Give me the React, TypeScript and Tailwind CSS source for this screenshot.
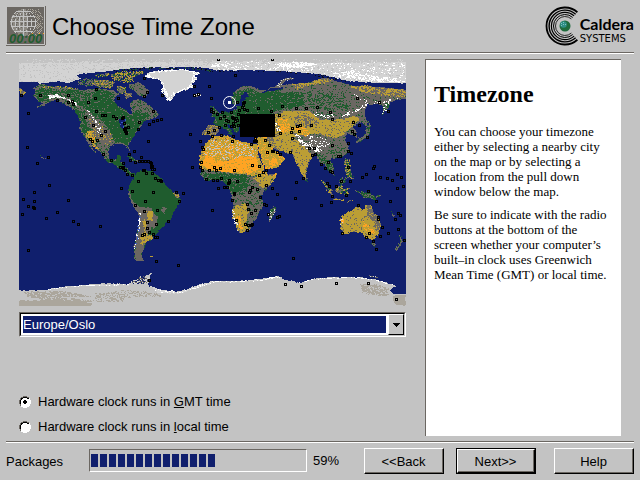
import React, { useState } from "react";

const MAP_W = 387;
const MAP_H = 247;

const PALETTE: Record<string, string> = {
  o: "#101f6d",
  u: "#3c5cc4",
  g: "#1f5c2e",
  s: "#6b6762",
  t: "#bb9e35",
  f: "#ffa423",
  i: "#c3c3c3",
  l: "#d3d3d3",
  d: "#aba69c",
  w: "#ffffff",
  k: "#0a0c18",
};

/* Terrain outlines live on four sheets, three units to a map pixel. */
type Sheet = "NW" | "NE" | "SW" | "SE";
const ORIGIN: Record<Sheet, [number, number]> = {
  NW: [-4, -4],
  NE: [191, -4],
  SW: [-4, 121],
  SE: [191, 121],
};

/* sheet, colour mix (one letter per share), outline */
const REGIONS: [Sheet, string, string][] = [
  ["NW", "lllllllliil", "0,0 600,0 600,45 570,38 545,37 500,36 450,39 400,38 350,40 300,46 250,52 205,56 185,62 200,70 160,84 130,80 75,85 60,81 0,82"],
  ["NE", "lllllliwl", "0,0 610,0 610,86 530,84 470,82 420,78 380,70 330,60 280,54 200,48 130,46 60,48 0,45"],
  ["NE", "iiiiiil", "0,0 610,0 610,20 420,24 0,18"],
  ["NW", "iiiiil", "0,0 600,0 600,20 12,24"],
  ["NE", "wwwl", "200,26 250,20 330,28 270,40 200,38"],
  ["NE", "wl", "360,56 420,48 480,62 560,68 588,82 470,78 400,68"],
  ["NE", "wl", "10,26 60,26 50,36 0,36"],
  ["NW", "ookog", "300,46 350,40 400,38 450,39 520,37 590,44 590,49 500,41 400,43 300,51"],
  ["NE", "ookoo", "0,46 200,48 330,58 380,70 420,80 380,78 320,64 200,51 0,50"],
  ["NW", "wwl", "390,62 410,49 450,46 500,42 540,50 556,55 540,62 545,75 530,85 535,95 520,102 500,108 480,118 470,135 455,138 448,120 438,105 445,90 430,72 400,68"],
  ["NW", "lllllll", "402,60 420,53 450,50 500,46 530,52 534,66 526,84 516,98 496,106 476,114 466,128 460,128 456,110 450,100 450,88 434,72 408,64"],
  ["NW", "ssgo", "190,78 215,68 245,72 240,90 215,94 188,88"],
  ["NW", "stgs", "235,74 285,76 300,84 290,100 255,98 232,88"],
  ["NW", "ttsgo", "285,58 330,48 395,50 370,60 350,70 360,78 330,84 296,76"],
  ["NW", "tsgo", "240,58 280,54 282,66 250,68"],
  ["NW", "ssssg", "342,88 372,82 388,92 400,108 392,128 370,120 356,104 345,98"],
  ["NW", "sstg", "305,92 330,96 336,112 315,118 306,106"],
  ["NW", "ssst", "328,116 350,112 352,126 334,130"],
  ["NW", "st", "12,100 30,106 34,118 14,122"],
  ["NW", "sssssgg", "55,100 75,88 120,95 165,97 200,105 245,100 290,105 312,115 300,130 295,140 305,152 325,160 340,172 348,178 350,160 345,150 350,138 375,132 395,145 420,165 432,182 415,190 385,200 372,222 355,240 345,260 340,272 346,290 335,275 320,268 300,268 285,275 280,300 285,312 300,315 308,300 320,302 315,318 330,335 345,350 365,360 355,365 335,355 315,340 300,328 275,318 262,300 240,275 225,262 245,298 232,285 215,255 200,235 193,215 198,200 185,175 172,160 150,148 125,135 105,140 88,152 60,160 85,145 65,135 55,120 65,110"],
  ["NW", "gggs", "60,112 80,98 120,102 150,108 158,122 150,130 120,124 100,128 72,142"],
  ["NW", "gggggggggs", "238,110 275,108 300,118 296,140 320,165 345,178 355,172 412,178 390,192 372,220 355,243 340,268 320,264 300,262 292,240 275,215 262,196 240,182 220,176 212,160 200,150 215,140 230,130"],
  ["NW", "gggs", "150,100 200,108 230,114 228,140 200,152 170,140"],
  ["NW", "ggggs", "172,150 190,160 208,182 215,200 222,222 216,238 200,230 196,205 186,178"],
  ["NW", "ssssst", "222,190 248,196 268,215 290,240 290,262 272,270 240,240 226,215"],
  ["NW", "wsss", "216,166 224,168 240,195 258,215 258,240 250,236 238,206"],
  ["NW", "ttttsf", "218,228 234,228 242,248 240,262 250,284 238,278 226,258 214,246"],
  ["NW", "tsss", "268,240 278,240 282,270 270,272"],
  ["NW", "wwl", "98,122 125,118 150,128 185,142 188,156 160,136 122,126 104,132"],
  ["NW", "ggggg", "272,308 284,314 300,318 308,300 318,302 314,318 330,336 345,352 362,362 350,364 318,342 298,328 278,320"],
  ["NW", "oooou", "314,192 330,188 334,200 324,222 316,215"],
  ["NW", "ggs", "330,300 350,306 372,318 362,322 340,308"],
  ["NW", "sttg", "62,94 120,94 165,96 190,102 165,101 90,98"],
  ["NW", "sw", "536,118 556,116 560,122 546,126 538,122"],
  ["NW", "gs", "72,300 88,308 92,314 78,306"],
  ["SW", "ggggggggggggggg", "355,-4 362,-20 380,-30 410,-26 430,-10 442,-4 450,15 475,35 495,50 497,62 485,80 475,95 470,115 455,125 440,145 420,165 410,180 395,185 390,200 380,215 378,230 388,243 370,243 360,235 360,200 368,170 372,130 374,100 355,75 343,50 340,30 345,12"],
  ["SW", "ssss", "340,28 345,34 350,60 374,80 410,84 414,96 426,110 428,130 416,146 408,140 400,165 392,182 390,200 380,215 378,230 388,243 370,243 360,235 360,200 368,170 372,130 374,100 355,78 343,50"],
  ["SW", "tttt", "397,92 412,94 414,108 410,122 398,118"],
  ["SW", "ttttts", "384,116 396,128 390,160 412,166 410,180 386,188 378,196 374,185 387,150"],
  ["SW", "ttss", "474,38 486,40 496,52 488,54 478,48"],
  ["SW", "sssg", "442,82 455,84 448,104 438,96"],
  ["SW", "wssu", "372,96 376,98 374,150 364,200 360,225 358,200 368,150"],
  ["SW", "st", "404,228 412,229 410,234 404,233"],
  ["NE", "sst", "-25,238 -5,208 15,212 32,214 28,228 10,243 -10,240"],
  ["NE", "gggggggggggs", "10,205 18,182 40,168 60,172 78,162 82,152 100,152 98,140 110,128 140,120 180,108 240,98 290,100 300,130 290,155 240,165 195,172 195,200 90,200 84,235 74,230 60,208 50,212 68,232 62,240 42,220 30,216"],
  ["NE", "gggs", "64,132 72,112 96,94 124,94 150,104 150,118 120,126 108,110 94,120 88,142 74,152 64,146"],
  ["NE", "ssss", "70,112 96,94 124,94 152,106 200,98 240,98 250,84 180,98 150,114 120,98"],
  ["NE", "ggs", "2,150 14,158 26,174 20,186 4,186 10,172"],
  ["NE", "ssl", "200,92 212,76 245,66 252,70 222,80 210,98"],
  ["NE", "sssssssg", "200,110 245,90 290,85 340,68 370,76 400,85 440,95 500,95 550,100 590,105 590,132 560,135 540,140 525,165 518,180 520,155 500,145 470,150 465,180 475,200 470,215 450,200 430,215 445,250 430,240 410,235 405,255 418,280 400,305 370,310 355,318 370,345 372,365 345,330 330,320 315,295 300,310 285,372 270,345 250,300 215,288 185,278 180,200 190,172 230,160"],
  ["NE", "gggggggs", "195,112 280,112 285,150 250,158 200,166 150,150"],
  ["NE", "ggsss", "285,110 330,105 400,130 420,160 370,170 300,160"],
  ["NE", "stts", "245,88 300,82 342,68 370,74 355,82 330,88 290,94 260,104"],
  ["NE", "tttsss", "420,94 470,90 500,98 588,104 588,128 540,124 490,120 440,106"],
  ["NE", "wsss", "415,104 440,122 460,132 500,140 540,132 572,126 530,144 495,146 450,134 430,120"],
  ["NE", "wwss", "468,140 474,146 462,160 440,168 400,188 394,184 420,170 452,158"],
  ["NE", "wssg", "310,168 350,178 380,172 385,184 350,190 312,180"],
  ["NE", "wsg", "528,144 546,136 540,150 526,168 518,180 520,156"],
  ["NE", "tttttttts", "190,180 225,168 300,168 330,195 400,192 440,182 448,196 425,214 400,240 370,250 330,236 300,236 270,240 250,250 275,262 300,292 305,310 292,330 285,372 270,345 250,300 215,288 185,278 190,240"],
  ["NE", "fftt", "200,190 240,192 240,222 280,212 300,235 290,246 250,222 222,236 205,222"],
  ["NE", "tws", "194,194 204,208 214,228 200,232"],
  ["NE", "tttss", "240,190 290,172 312,190 330,215 300,220 260,215"],
  ["NE", "wwss", "250,232 268,240 282,262 310,276 352,262 338,290 302,288 272,270"],
  ["NE", "wsss", "290,240 345,250 368,270 340,280 300,272"],
  ["NE", "ssggs", "352,290 404,276 414,290 398,306 370,308"],
  ["NE", "ggs", "318,296 340,306 368,326 370,345 362,356 350,330 330,318"],
  ["NE", "sst", "140,246 190,246 200,280 160,262 145,266"],
  ["NE", "tttttf", "136,248 170,246 185,280 225,310 205,336 168,346 150,300 146,270"],
  ["NE", "ffft", "180,318 200,308 206,328 176,342"],
  ["NE", "sgs", "476,196 482,216 478,236 462,252 440,266 438,258 466,238"],
  ["NE", "sg", "414,278 420,292 414,296"],
  ["NE", "gts", "404,310 416,312 424,350 430,372 412,366 404,336"],
  ["NE", "gs", "398,382 408,366 412,370 404,384"],
  ["NE", "gs", "286,366 294,370 294,382 288,380"],
  ["NE", "tttttttfs", "-30,332 -30,300 -15,270 5,243 50,240 65,250 100,262 140,268 146,300 165,345 175,358 200,355 192,380 165,400 100,395 60,396 50,382 30,372 -15,375"],
  ["NE", "tfti", "-25,290 0,256 60,256 134,270 136,306 60,312 0,320"],
  ["NE", "fffffffft", "-30,328 -10,300 40,322 90,304 140,306 148,340 120,356 40,350 0,344"],
  ["NE", "gss", "-30,336 -10,346 50,352 140,362 150,372 60,372 -15,376 -28,356"],
  ["NE", "ggggggs", "-20,358 50,356 100,358 120,372 120,390 56,394 30,374 -14,376"],
  ["SE", "ssssg", "50,-2 190,-10 178,18 150,50 160,75 150,95 135,120 120,150 90,160 80,140 68,100 70,60 60,35"],
  ["SE", "gggggs", "48,-6 112,-8 118,18 100,32 76,40 60,34"],
  ["SE", "ttttts", "130,-8 192,-14 178,14 160,26 140,10"],
  ["SE", "ttttttts", "68,90 82,74 108,70 116,96 106,130 118,150 92,160 80,140"],
  ["SE", "fft", "76,108 92,110 96,150 86,140"],
  ["SE", "wtl", "70,88 74,106 88,156 84,152 66,104"],
  ["SE", "ssgl", "176,96 192,78 198,86 188,116 178,126"],
  ["SE", "stsg", "336,2 350,10 366,34 372,50 360,44 344,18"],
  ["SE", "st", "370,56 400,58 400,62 372,60"],
  ["SE", "gsst", "376,22 396,14 402,30 396,42 380,38"],
  ["SE", "stg", "402,28 420,22 412,34 420,44 406,44"],
  ["SE", "gs", "386,8 396,-8 404,6 396,14"],
  ["SE", "st", "410,66 430,58 426,62 414,68"],
  ["SE", "sg", "430,26 440,30 450,42 440,38"],
  ["SE", "gggs", "448,32 470,38 490,46 498,62 478,54 460,54 454,42"],
  ["SE", "sg", "496,48 512,44 508,50 496,54"],
  ["SE", "ttttttttttts", "390,120 400,105 425,90 445,78 460,90 470,72 480,75 490,95 505,110 512,135 505,160 490,180 470,175 455,158 425,155 400,165 392,145"],
  ["SE", "sssst", "472,74 480,76 490,95 506,112 513,135 506,158 494,144 484,120 472,102"],
  ["SE", "ttff", "458,124 468,126 480,140 496,152 494,164 476,162 464,148"],
  ["SE", "tlf", "390,118 402,112 400,128 392,134"],
  ["SE", "sg", "484,188 496,190 492,202"],
  ["SE", "ssg", "568,162 582,184 574,192 558,212 552,208 570,188"],
  ["SE", "sg", "542,92 556,110 550,112"],
  ["SW", "iiiiiiiii", "0,332 90,330 150,320 200,316 270,309 340,313 355,304 372,296 388,290 410,278 400,302 402,318 440,332 490,336 540,318 590,304 600,400 0,400"],
  ["SW", "sslo", "345,308 370,298 378,288 400,294 398,308 366,312"],
  ["SE", "iiiiiiiii", "0,303 60,305 150,298 200,290 215,290 216,299 250,302 262,310 320,295 390,292 450,292 500,300 552,315 560,320 538,330 552,342 600,342 600,400 0,400"],
  ["SW", "dddi", "24,336 120,332 190,340 230,350 120,352 240,360 230,366 90,362 40,350"],
  ["SW", "dddddd", "12,362 90,360 190,364 236,370 230,378 12,378"],
  ["SW", "ddii", "240,340 340,330 430,340 440,350 350,352 320,364 240,366"],
  ["SE", "ddi", "450,312 500,314 540,326 530,334 540,344 520,350 460,340"],
  ["SE", "dddd", "548,346 588,344 588,376 556,374 550,360"],
  ["SE", "wl", "0,303 60,305 150,298 200,290 214,292 214,296 200,294 150,302 60,308 0,306"],
  ["SE", "wi", "262,310 320,295 390,292 450,292 500,300 552,315 500,303 450,295 390,295 320,298 268,310"],
  ["SW", "wl", "100,327 150,320 200,316 340,313 342,316 200,319 150,323 100,330"],
  ["SW", "llw", "405,318 440,330 490,335 540,318 590,304 590,312 540,326 490,342 430,338"],
  ["SE", "sl", "476,286 508,292 500,294 480,290"],
];

const MARKS: Record<Sheet, string> = {
  NW: "19,121 76,121 160,121 127,136 160,142 172,139 175,148 244,103 241,130 220,142 244,169 211,187 262,181 271,181 295,184 304,190 310,130 388,70 397,112 388,124 442,121 538,94 583,94 538,121 550,118 589,130 40,175 37,277 67,325 100,307 235,211 247,256 226,253 259,241 271,229 232,259 265,298 289,316 328,205 340,217 373,202 370,223 403,208 415,199 427,196 439,193 415,169 322,190 325,187 331,220 329,223 331,229 334,235 332,226 334,232 526,238 556,259 580,232 400,259 358,289 343,298 379,307 325,325 346,316 361,322 373,319 382,319 391,319 400,319 406,322 409,328 412,334 412,343 418,343 412,355 394,355 385,346 388,346 410,325 410,337 316,337 325,340 325,337 331,346 337,358 352,361 370,379 421,370 430,376 439,379 532,337 556,337 562,346 559,322 562,277 565,283 574,373 583,346 589,169",
  NE: "25,13 187,13 76,61 81,142 4,130 103,163 100,150 112,166 97,158 145,160 184,169 217,154 259,160 289,160 322,157 361,172 367,193 208,181 442,130 508,142 535,169 304,211 262,214 268,229 247,220 244,232 247,250 271,211 211,235 430,202 448,211 427,229 433,238 472,247 415,265 415,289 424,295 391,304 385,304 415,337 367,271 313,280 298,280 307,301 316,298 334,328 355,322 346,340 361,349 367,352 352,385 280,370 259,382 166,256 178,271 187,289 190,289 202,292 211,298 241,292 172,292 124,268 136,250 139,259 136,259 133,259 67,259 70,244 34,241 7,244 127,331 148,334 148,361 160,352 169,346 13,337 31,340 19,346 73,346 10,376 22,376 34,370 58,382 82,379 559,316 490,340 493,334 469,358 457,367 511,367 532,370 547,376 562,358 574,367 421,379 4,163 10,172 22,178 31,190 43,184 37,172 49,196 55,199 64,172 67,187 70,205 79,190 85,178 64,214 46,211 28,217 13,226 88,166 82,196 76,199 70,190 73,214 85,211 103,142 100,145",
  SW: "436,2 103,16 319,25 58,37 25,58 58,64 40,79 55,82 58,85 22,103 160,61 127,97 94,115 175,124 190,133 256,139 40,211 352,34 415,37 391,64 361,76 388,94 427,91 484,37 505,40 493,64 460,124 424,133 397,127 397,145 403,157 388,163 382,166 415,163 421,172 427,172 424,244 490,256 403,301 592,91",
  SE: "25,25 43,22 52,22 55,10 58,0 7,91 67,61 73,43 73,40 121,31 127,22 118,37 142,28 151,52 169,16 187,25 202,43 256,55 163,73 169,76 112,73 115,88 136,91 124,100 106,133 115,136 121,136 124,136 127,133 112,151 79,121 175,103 202,112 208,109 334,76 364,67 367,49 352,10 358,19 379,19 394,4 409,46 475,34 499,64 541,64 445,76 547,1 562,25 580,19 505,112 505,118 517,142 511,169 535,160 478,160 469,172 490,184 499,208 397,160 565,100 571,106 556,118 565,148 583,181 250,235 226,313 274,319 379,310 475,310 559,358",
};

function hash(x: number, y: number, k: number): number {
  let h = (x * 374761393 + y * 668265263 + k * 1442695041) | 0;
  h = Math.imul(h ^ (h >>> 13), 1274126177);
  h = Math.imul(h ^ (h >>> 15), 2246822519);
  return ((h ^ (h >>> 16)) >>> 0) / 4294967296;
}

function parse(list: string): [number, number][] {
  return list.split(" ").map((p) => p.split(",").map(Number) as [number, number]);
}

function inside(pts: [number, number][], x: number, y: number): boolean {
  let hit = false;
  for (let i = 0, j = pts.length - 1; i < pts.length; j = i++) {
    const [xi, yi] = pts[i];
    const [xj, yj] = pts[j];
    if (yi > y !== yj > y && x < ((xj - xi) * (y - yi)) / (yj - yi) + xi) hit = !hit;
  }
  return hit;
}

function paintWorld(): [string, string][] {
  const grid: string[] = [];
  for (let i = 0; i < MAP_W * MAP_H; i++) grid.push("o");

  REGIONS.forEach(([sheet, mix, outline], k) => {
    const [ox, oy] = ORIGIN[sheet];
    const pts = parse(outline).map(([x, y]) => [x / 3 + ox, y / 3 + oy] as [number, number]);
    const xs = pts.map((p) => p[0]);
    const ys = pts.map((p) => p[1]);
    const x0 = Math.max(0, Math.floor(Math.min(...xs)) - 1);
    const x1 = Math.min(MAP_W - 1, Math.ceil(Math.max(...xs)) + 1);
    const y0 = Math.max(0, Math.floor(Math.min(...ys)) - 1);
    const y1 = Math.min(MAP_H - 1, Math.ceil(Math.max(...ys)) + 1);
    for (let y = y0; y <= y1; y++) {
      for (let x = x0; x <= x1; x++) {
        const jx = (hash(x >> 1, y >> 1, k) - 0.5) * 2;
        const jy = hash(x >> 1, y >> 1, k + 500) - 0.5;
        if (!inside(pts, x + 0.5 + jx, y + 0.5 + jy)) continue;
        const coarse = hash(x >> 1, y, k + 40);
        const pick = hash(x, y, k + 90) < 0.5 ? coarse : hash(x, y, k + 7);
        grid[y * MAP_W + x] = mix[Math.floor(pick * mix.length)];
      }
    }
  });

  const paths: Record<string, string> = {};
  for (let y = 0; y < MAP_H; y++) {
    let x = 0;
    while (x < MAP_W) {
      const c = grid[y * MAP_W + x];
      let end = x + 1;
      while (end < MAP_W && grid[y * MAP_W + end] === c) end++;
      if (c !== "o") paths[c] = (paths[c] || "") + `M${x} ${y}h${end - x}v1h${x - end}z`;
      x = end;
    }
  }
  return Object.entries(paths);
}

function cityPath(): string {
  return (Object.keys(MARKS) as Sheet[])
    .map((sheet) => {
      const [ox, oy] = ORIGIN[sheet];
      return parse(MARKS[sheet])
        .map(([x, y]) => {
          const px = Math.floor(x / 3) + ox - 1;
          const py = Math.floor(y / 3) + oy - 1;
          return `M${px} ${py}h3v3h-3zM${px + 1} ${py + 1}v1h1v-1z`;
        })
        .join("");
    })
    .join("");
}

const WORLD = paintWorld();
const CITIES = cityPath();

function WorldMap() {
  return (
    <svg
      viewBox={`0 0 ${MAP_W} ${MAP_H}`}
      className="block w-full bg-[#101f6d]"
      shapeRendering="crispEdges"
      role="img"
      aria-label="World map"
    >
      {WORLD.map(([c, d]) => (
        <path key={c} d={d} fill={PALETTE[c]} />
      ))}
      <path d={CITIES} fill="#000" />
      <rect x="221" y="55" width="35" height="23" fill="#000" />
      <circle cx="210.500" cy="43.500" r="6" fill="none" stroke="#fff" strokeWidth="1" shapeRendering="auto" />
      <rect x="209" y="42" width="3" height="3" fill="#fff" />
    </svg>
  );
}

function ClockIcon() {
  const dots: React.ReactElement[] = [];
  for (let y = 0; y < 27; y++) {
    for (let x = 0; x < 36; x++) {
      const dx = x - 15;
      const dy = y - 13;
      const r = Math.sqrt(dx * dx + dy * dy);
      let fill = "";
      if (r < 13.3) {
        const bend = Math.round((dx / Math.sqrt(Math.max(8, 178 - dy * dy))) * 20);
        const line = y % 5 === 2 || Math.abs(bend) % 6 === 0;
        if (line) fill = "#c3c3c3";
        else if (dx < 5 && hash(x, y, 3) < 0.75) fill = "#8d8a83";
      } else if (dx > 4 && r < 20 && (x + y) % 2 === 0 && hash(x, y, 9) < 0.7) {
        fill = "#aba69c";
      }
      if (fill) dots.push(<rect key={`${x}-${y}`} x={x + 2} y={y + 3} width="1" height="1" fill={fill} />);
    }
  }
  return (
    <svg viewBox="0 0 40 40" className="size-10 shrink-0" shapeRendering="crispEdges" aria-hidden="true">
      <path d="M1 1h37v37H1z" fill="#6b6762" />
      <path d="M39 0h1v39h-1zM0 39h39v1H0z" fill="#6b6762" />
      {dots}
      <text x="3" y="37" fill="#1f5c2e" className="font-['Liberation_Sans',Arial,sans-serif] text-[13px] font-bold italic">
        00:00
      </text>
      <path d="M26 27h1v1h-1zM33 27h1v1h-1zM37 27h1v1h-1z" fill="#ffa423" />
    </svg>
  );
}

function arc(r: number): string {
  const a = (48 * Math.PI) / 180;
  const x = (20 + r * Math.cos(a)).toFixed(2);
  const dy = r * Math.sin(a);
  return `M${x} ${(20 - dy).toFixed(2)}A${r} ${r} 0 1 0 ${x} ${(20 + dy).toFixed(2)}`;
}

function CalderaLogo() {
  return (
    <div className="flex items-center text-black">
      <svg viewBox="0 0 35 40" className="h-10 w-[35px] shrink-0" aria-hidden="true">
        <g fill="none" stroke="#000">
          <path d={arc(18.5)} strokeWidth="1.8" />
          <path d={arc(15.900)} strokeWidth="1.4" />
          <path d={arc(13.600)} strokeWidth="1.2" />
          <path d={arc(11.500)} strokeWidth="1" />
          <path d={arc(9.500)} strokeWidth="0.8" />
        </g>
        <circle cx="20" cy="20" r="5.500" fill="#1f6b3c" />
        <circle cx="18.500" cy="18.500" r="3.300" fill="#2f8f86" />
        <path d="M16 17h1v1h-1zM18 16h1v1h-1zM18 18h1v1h-1zM16 19h1v1h-1zM20 18h1v1h-1z" fill="#7fc4c0" />
      </svg>
      <div className="flex flex-col pt-2">
        <span className="font-['Lato',sans-serif] text-base leading-[18px] font-bold">Caldera</span>
        <span className="font-['DejaVu_Sans',sans-serif] text-[10px] leading-3">SYSTEMS</span>
      </div>
    </div>
  );
}

function Rule() {
  return <div className="mx-[6px] h-[2px] border-t border-b border-t-[#6b6762] border-b-white" />;
}

function ClockOption(props: {
  value: string;
  checked: boolean;
  onPick: (v: string) => void;
  children: React.ReactNode;
}) {
  return (
    <label className="flex h-[18px] items-center gap-[7px]">
      <span className="relative block size-3">
        <input
          type="radio"
          name="hwclock"
          value={props.value}
          checked={props.checked}
          onChange={() => props.onPick(props.value)}
          className="peer block size-3 appearance-none outline-none"
        />
        <svg viewBox="0 0 12 12" className="pointer-events-none absolute inset-0 size-3" shapeRendering="crispEdges">
          <path d="M4 1h4v1h2v2h1v4h-1v2h-2v1h-4v-1h-2v-2h-1v-4h1v-2h2z" fill="#fff" />
          <path d="M4 0h4v1h2v1h-2v-1h-4v1h-2v2h-1v4h1v2h-1v-2h-1v-4h1v-2h1v-1h2z" fill="#6b6762" />
          <path d="M4 1h4v1h2v1h-2v-1h-4v1h-1v1h-1v4h-1v-4h1v-2h2z" fill="#000" />
          <path d="M10 2h1v2h1v4h-1v2h-1v1h-2v1h-4v-1h-2v-1h2v1h4v-1h2v-2h1v-4h-1z" fill="#fff" />
        </svg>
        <svg
          viewBox="0 0 12 12"
          className="pointer-events-none absolute inset-0 hidden size-3 peer-checked:block"
          shapeRendering="crispEdges"
        >
          <path d="M5 4h2v1h1v2h-1v1h-2v-1h-1v-2h1z" fill="#000" />
        </svg>
      </span>
      <span>{props.children}</span>
    </label>
  );
}

function Beveled(props: { children: React.ReactNode; primary?: boolean }) {
  if (props.primary) {
    return (
      <button className="flex h-[26px] w-20 border border-black bg-[#c3c3c3]">
        <span className="flex flex-1 self-stretch border border-t-white border-r-black border-b-black border-l-white">
          <span className="flex flex-1 items-center justify-center border-r border-b border-[#6b6762] pt-[3px]">
            {props.children}
          </span>
        </span>
      </button>
    );
  }
  return (
    <button className="flex h-[26px] w-20 border border-t-white border-r-black border-b-black border-l-white bg-[#c3c3c3]">
      <span className="flex flex-1 items-center justify-center self-stretch border-r border-b border-[#6b6762] pt-[3px]">
        {props.children}
      </span>
    </button>
  );
}

export default function App() {
  const [clock, setClock] = useState("gmt");
  return (
    <div className="flex min-h-screen flex-col bg-[#c3c3c3] font-['Liberation_Sans',Arial,sans-serif] text-[13px] leading-4 text-black">
      <header className="flex h-[52px] items-center justify-between pr-[6px] pl-[6px]">
        <div className="flex items-center gap-[6px]">
          <ClockIcon />
          <h1 className="pt-[2px] text-2xl leading-8">Choose Time Zone</h1>
        </div>
        <CalderaLogo />
      </header>
      <Rule />

      <main className="flex flex-1 gap-[19px] pt-[5px] pr-[19px] pb-[5px] pl-[19px]">
        <section className="flex flex-1 flex-col">
          <WorldMap />
          <div className="relative mt-[6px] h-[25px] border border-t-[#6b6762] border-r-white border-b-white border-l-[#6b6762]">
            <div className="h-full border border-t-black border-r-[#c3c3c3] border-b-[#c3c3c3] border-l-black bg-white py-[2px] pr-[18px] pl-[2px]">
              <select
                aria-label="Time zone"
                defaultValue="Europe/Oslo"
                className="block h-[17px] w-full appearance-none bg-[#101f6d] p-0 leading-4 text-white outline-none"
              >
                <option>Europe/Oslo</option>
              </select>
            </div>
            <div className="pointer-events-none absolute top-[1px] right-[1px] flex h-[21px] w-4 items-center justify-center border border-t-white border-r-black border-b-black border-l-white bg-[#c3c3c3]">
              <svg viewBox="0 0 7 4" className="h-1 w-[7px]" shapeRendering="crispEdges">
                <path d="M0 0h7v1h-1v1h-1v1h-1v1h-1v-1h-1v-1h-1v-1h-1z" fill="#000" />
              </svg>
            </div>
          </div>
          <fieldset className="mt-14 flex flex-col gap-[7px]">
            <ClockOption value="gmt" checked={clock === "gmt"} onPick={setClock}>
              Hardware clock runs in <u>G</u>MT time
            </ClockOption>
            <ClockOption value="local" checked={clock === "local"} onPick={setClock}>
              Hardware clock runs in <u>l</u>ocal time
            </ClockOption>
          </fieldset>
        </section>

        <aside className="w-[196px] border-t border-l border-[#6b6762] bg-white px-2 font-['Liberation_Serif','Times_New_Roman',serif] leading-[15px]">
          <h2 className="mt-5 text-2xl leading-7 font-bold">Timezone</h2>
          <p className="mt-4">
            You can choose your timezone
            <br />
            either by selecting a nearby city
            <br />
            on the map or by selecting a<br />
            location from the pull down
            <br />
            window below the map.
          </p>
          <p className="mt-2">
            Be sure to indicate with the radio
            <br />
            buttons at the bottom of the
            <br />
            screen whether your computer’s
            <br />
            built–in clock uses Greenwich
            <br />
            Mean Time (GMT) or local time.
          </p>
        </aside>
      </main>

      <Rule />
      <footer className="flex h-[37px] items-center pr-[6px] pb-[2px] pl-[6px]">
        <span className="w-[83px] pt-[2px]" id="step">
          Packages
        </span>
        <div
          role="progressbar"
          aria-labelledby="step"
          aria-valuenow={59}
          className="flex h-[23px] flex-1 items-center gap-[2px] border border-t-[#6b6762] border-r-white border-b-white border-l-[#6b6762] px-[1px]"
        >
          {Array.from({ length: 14 }, (_, i) => (
            <span key={i} className="h-[13px] w-[7px] bg-[#101f6d]" />
          ))}
        </div>
        <span className="w-[57px] pl-[6px]">59%</span>
        <div className="flex gap-3">
          <Beveled>&lt;&lt;Back</Beveled>
          <Beveled primary>Next&gt;&gt;</Beveled>
        </div>
        <div className="ml-[18px]">
          <Beveled>Help</Beveled>
        </div>
      </footer>
    </div>
  );
}
